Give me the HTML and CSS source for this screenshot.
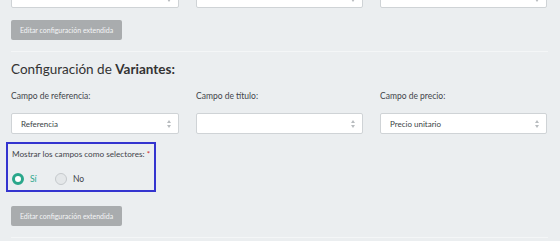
FILE: index.html
```html
<!DOCTYPE html>
<html lang="es">
<head>
<meta charset="utf-8">
<link rel="stylesheet" href="styles.css">
</head>
<body>
<div class="page">
  <div class="row row-top">
    <div class="col"><div class="select"><span></span><i class="arrows"></i></div></div>
    <div class="col"><div class="select"><span></span><i class="arrows"></i></div></div>
    <div class="col"><div class="select"><span>Categoría y</span><i class="arrows"></i></div></div>
  </div>
  <button class="btn">Editar configuración extendida</button>
  <hr class="sep">
  <h2 class="title">Configuración de <b>Variantes:</b></h2>
  <div class="row">
    <div class="col">
      <label class="lbl">Campo de referencia:</label>
      <div class="select"><span>Referencia</span><i class="arrows"></i></div>
    </div>
    <div class="col">
      <label class="lbl">Campo de título:</label>
      <div class="select"><span></span><i class="arrows"></i></div>
    </div>
    <div class="col">
      <label class="lbl">Campo de precio:</label>
      <div class="select"><span>Precio unitario</span><i class="arrows"></i></div>
    </div>
  </div>
  <div class="highlight">
    <div class="lbl lbl-box">Mostrar los campos como selectores: <span class="req">*</span></div>
    <div class="radios">
      <span class="radio on"><i class="dot"></i>Sí</span>
      <span class="radio"><i class="dot"></i>No</span>
    </div>
  </div>
  <button class="btn">Editar configuración extendida</button>
  <hr class="sep">
</div>
</body>
</html>
```

FILE: styles.css
```css
* { box-sizing: border-box; }
html, body { margin: 0; padding: 0; }
body {
  background: #ebeef0;
  font-family: Lato, "Open Sans", sans-serif;
  color: #3a3f44;
  width: 560px;
  height: 241px;
  overflow: hidden;
}
.page {
  padding: 0 12px 0 11px;
}
.row {
  display: grid;
  grid-template-columns: 168px 167px 167px;
  column-gap: 17px;
}
.row-top {
  margin-top: -13px;
}
.select {
  height: 21px;
  background: #fff;
  border: 1px solid #cfd3d6;
  border-radius: 2px;
  display: flex;
  align-items: center;
  justify-content: space-between;
  padding: 0 6px 0 9px;
  font-size: 8px;
  color: #3a3f44;
}
.row-top .select span { margin-top: -4px; }
.arrows {
  position: relative;
  width: 5px;
  height: 8px;
}
.arrows::before, .arrows::after {
  content: "";
  position: absolute;
  left: 0;
  border-left: 2.5px solid transparent;
  border-right: 2.5px solid transparent;
}
.arrows::before {
  top: 0;
  border-bottom: 3px solid #b8bcbf;
}
.arrows::after {
  bottom: 0;
  border-top: 3px solid #b8bcbf;
}
.btn {
  display: block;
  margin-top: 12px;
  height: 20px;
  width: 111px;
  padding: 0;
  border: none;
  border-radius: 2px;
  background: #a9acae;
  color: #f4f5f6;
  font-family: Lato, sans-serif;
  font-size: 7px;
  text-align: center;
}
.sep {
  border: none;
  border-top: 1px solid #f4f6f7;
  margin: 11px 0 0 0;
  height: 0;
}
.title {
  margin: 8px 0 0 0;
  font-size: 13.5px;
  font-weight: 400;
  line-height: 18px;
  color: #333;
}
.title b { font-weight: 700; }
.lbl {
  display: block;
  font-size: 8.5px;
  line-height: 11px;
  color: #3f444a;
}
.lbl-box {
  font-size: 8.2px;
  white-space: nowrap;
}
.row .lbl {
  margin-top: 13px;
  margin-bottom: 11px;
}
.highlight {
  margin: 8px 0 0 -5px;
  width: 150px;
  height: 50px;
  border: 2px solid #3434cf;
  padding: 5px 0 0 4px;
}
.req { color: #d0312d; }
.radios {
  display: flex;
  margin-top: 13px;
  font-size: 8.5px;
  line-height: 12px;
}
.radio {
  display: flex;
  align-items: center;
  color: #3f444a;
  width: 43px;
}
.radio.on { color: #2aa78b; }
.dot {
  width: 12px;
  height: 12px;
  border-radius: 50%;
  border: 1px solid #c5c9cc;
  background: #e4e7e9;
  margin-right: 6px;
  flex: none;
}
.radio.on .dot {
  border: 3.5px solid #2aa78b;
  background: #fff;
}
.highlight + .btn { margin-top: 14px; }
```
